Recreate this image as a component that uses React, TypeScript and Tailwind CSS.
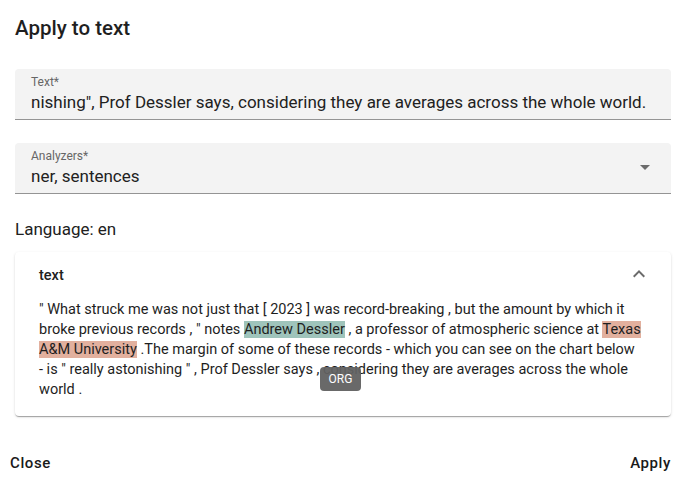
const Field = ({ label, value, select }: { label: string; value: string; select?: boolean }) => {
  return (
    <div className="relative h-[51px] rounded-t-[4px] border-b border-[#949494] bg-[#f3f3f3] pl-[16px] pr-[16px]">
      <div className="pt-[6px] text-[12px] leading-[14px] text-[#666666]">{label}</div>
      <div className="mt-[1px] truncate whitespace-nowrap text-[17px] leading-[24px] text-[#212121]">{value}</div>
      {select && (
        <svg className="absolute right-[21px] top-[22px]" width="10" height="5" viewBox="0 0 10 5">
          <path d="M0 0 L10 0 L5 5 Z" fill="#6b6b6b" />
        </svg>
      )}
    </div>
  );
};

const Mark = ({ children, color }: { children: React.ReactNode; color: string }) => (
  <span className={color}>{children}</span>
);

const App = () => {
  return (
    <div className="relative flex h-[484px] w-[686px] flex-col bg-white font-['Roboto',sans-serif] text-[#212121]">
      <div className="px-[15px]">
        <h2 className="pt-[12px] text-[20.5px] font-medium leading-[32px] text-[#1f1f1f]">Apply to text</h2>

        <div className="mt-[25px]">
          <Field
            label="Text*"
            value={'nishing", Prof Dessler says, considering they are averages across the whole world.'}
          />
        </div>

        <div className="mt-[23px]">
          <Field label="Analyzers*" value="ner, sentences" select />
        </div>

        <p className="mt-[23px] text-[17px] leading-[24px]">Language: en</p>

        <div className="mt-[11px] rounded-[4px] bg-white px-[24px] pb-[16px] shadow-[0_2px_1px_-1px_rgba(0,0,0,0.2),0_1px_1px_0_rgba(0,0,0,0.14),0_1px_3px_0_rgba(0,0,0,0.12)]">
          <div className="flex h-[48px] items-center justify-between">
            <span className="text-[14.5px] font-medium">text</span>
            <svg width="24" height="24" viewBox="0 0 24 24" className="mr-[-4px] mt-[-4px]">
              <path d="M12 8l-6 6 1.41 1.41L12 10.83l4.59 4.58L18 14z" fill="#6b6b6b" />
            </svg>
          </div>
          <p className="relative text-[14.5px] leading-[20px] text-[#1e1e1e]">
            " What struck me was not just that [ 2023 ] was record-breaking , but the amount by which it broke previous
            records , " notes <Mark color="bg-[#9fc4bb]">Andrew Dessler</Mark> , a professor of atmospheric science at{" "}
            <Mark color="bg-[#e2b09e]">Texas A&amp;M University</Mark> .The margin of some of these records - which you can
            see on the chart below <span className="whitespace-nowrap">- is</span> " really astonishing " , Prof Dessler
            says , considering they are averages across the whole world .
          </p>
        </div>
      </div>

      <div className="absolute left-[320px] top-[367px] flex h-[24px] w-[41px] items-center justify-center rounded-[4px] bg-[#616161]/95 text-[12px] text-white">
        ORG
      </div>

      <div className="mt-auto flex items-center justify-between pb-[10px] pl-[10px] pr-[15px]">
        <button className="text-[15px] font-medium tracking-[0.6px] text-[#1a1a1a]">Close</button>
        <button className="text-[15px] font-medium tracking-[0.6px] text-[#1a1a1a]">Apply</button>
      </div>
    </div>
  );
};

export default App;
